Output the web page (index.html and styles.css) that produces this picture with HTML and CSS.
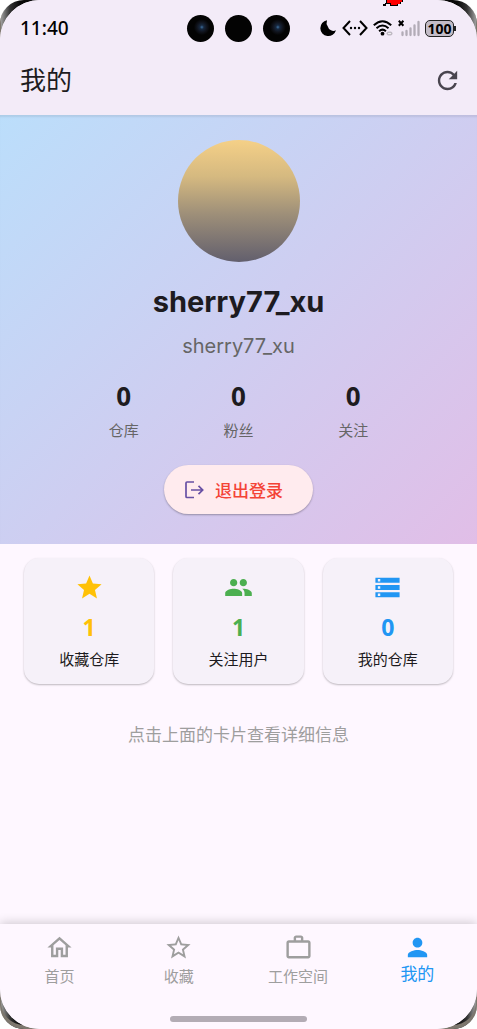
FILE: index.html
```html
<!DOCTYPE html>
<html lang="zh-CN">
<head>
  <meta charset="UTF-8">
  <meta name="viewport" content="width=device-width, initial-scale=1.0">
  <title>我的</title>
  <link rel="stylesheet" href="styles.css">
</head>
<body>
  <div class="device">
    <div class="screen">
      <header class="top">
        <div class="status-bar">
          <span class="time">11:40</span>
          <div class="cameras">
            <span class="camera lens"></span>
            <span class="camera"></span>
            <span class="camera lens"></span>
          </div>
          <div class="status-icons">
            <svg width="18" height="18" viewBox="0 0 18 18"><path d="M8 1.200A8 8 0 1 0 17 11.300A5.800 5.800 0 0 1 8.800 7.500A7 7 0 0 1 8 1.200z" fill="#000"/></svg>
            <svg width="26" height="18" viewBox="0 0 26 18"><path d="M8 2L1.500 9L8 16M18 2L24.500 9L18 16" fill="none" stroke="#000" stroke-width="2"/><g fill="#000"><circle cx="9" cy="9" r="1.200"/><circle cx="13" cy="9" r="1.200"/><circle cx="17" cy="9" r="1.200"/></g></svg>
            <svg width="20" height="18" viewBox="0 0 20 18"><g fill="none" stroke="#000" stroke-width="2"><path d="M.8 6.300Q9.500-1.800 18.200 6.300"/><path d="M3.500 9.300Q9.500 3.700 15.500 9.300"/><path d="M6.100 12.200Q9.500 9 12.900 12.200"/></g><circle cx="9.500" cy="14.700" r="1.900" fill="#000"/><rect x="13.500" y="12.500" width="6" height="4" rx="2" fill="#c0bac4"/><path d="M15 14.500h3" stroke="#eee"/></svg>
            <svg width="22" height="18" viewBox="0 0 22 18"><path d="M.8 1.800l4.600 5M5.400 1.800l-4.600 5" stroke="#000" stroke-width="2"/><path d="M4.500 13.500V16M8.500 12V16M12.500 9.500V16M16.500 6.500V16M20.500 3V16" stroke="#b2acb7" stroke-width="2.300" stroke-linecap="round"/></svg>
            <span class="battery">100</span>
          </div>
        </div>
        <div class="app-bar">
          <h1>我的</h1>
          <button class="refresh" aria-label="刷新">
            <svg width="29" height="29" viewBox="0 0 24 24"><path fill="currentColor" d="M17.650 6.350C16.200 4.900 14.210 4 12 4c-4.420 0-7.990 3.580-7.990 8s3.570 8 7.990 8c3.730 0 6.840-2.550 7.730-6h-2.080c-.82 2.330-3.040 4-5.650 4-3.310 0-6-2.690-6-6s2.690-6 6-6c1.660 0 3.140.69 4.220 1.780L13 11h7V4l-2.350 2.350z"/></svg>
          </button>
        </div>
      </header>

      <main>
        <section class="profile">
          <div class="avatar"></div>
          <h2 class="name">sherry77_xu</h2>
          <p class="login">sherry77_xu</p>
          <div class="stats">
            <div class="stat"><strong>0</strong><span>仓库</span></div>
            <div class="stat"><strong>0</strong><span>粉丝</span></div>
            <div class="stat"><strong>0</strong><span>关注</span></div>
          </div>
          <button class="logout">
            <svg width="22" height="22" viewBox="0 0 22 22"><path d="M11 3H4Q3 3 3 4V17.500Q3 18.500 4 18.500H11M8 11H19.500M15.500 6.800L19.700 11L15.500 15.200" fill="none" stroke="#6750a4" stroke-width="1.700"/></svg>
            退出登录
          </button>
        </section>

        <section class="cards">
          <button class="card starred">
            <svg width="29" height="29" viewBox="0 0 24 24"><path fill="currentColor" d="M12 17.270L18.180 21l-1.640-7.030L22 9.240l-7.190-.61L12 2 9.190 8.630 2 9.240l5.460 4.730L5.820 21z"/></svg>
            <strong>1</strong>
            <span>收藏仓库</span>
          </button>
          <button class="card following">
            <svg width="29" height="29" viewBox="0 0 24 24"><path fill="currentColor" d="M16 11c1.660 0 2.990-1.340 2.990-3S17.660 5 16 5s-3 1.340-3 3 1.340 3 3 3zM8 11c1.660 0 2.990-1.340 2.990-3S9.660 5 8 5 5 6.340 5 8s1.340 3 3 3zM8 13c-2.330 0-7 1.170-7 3.500V19h14v-2.500c0-2.330-4.670-3.500-7-3.500zM16 13c-.29 0-.62.02-.97.05 1.160.84 1.970 1.970 1.970 3.450V19h6v-2.500c0-2.330-4.670-3.500-7-3.500z"/></svg>
            <strong>1</strong>
            <span>关注用户</span>
          </button>
          <button class="card repos">
            <svg width="29" height="29" viewBox="0 0 24 24"><path fill="currentColor" d="M2 20h20v-4H2v4zm2-3h2v2H4v-2zM2 4v4h20V4H2zm4 3H4V5h2v2zm-4 7h20v-4H2v4zm2-3h2v2H4v-2z"/></svg>
            <strong>0</strong>
            <span>我的仓库</span>
          </button>
        </section>
        <p class="hint">点击上面的卡片查看详细信息</p>
      </main>

      <nav class="tab-bar">
        <div class="tabs">
          <a href="#home" class="tab">
            <svg width="29" height="29" viewBox="0 0 24 24"><path fill="currentColor" d="M12 5.690l5 4.500V18h-2v-6H9v6H7v-7.810l5-4.500M12 3L2 12h3v8h6v-6h2v6h6v-8h3L12 3z"/></svg>
            <span>首页</span>
          </a>
          <a href="#starred" class="tab">
            <svg width="29" height="29" viewBox="0 0 24 24"><path fill="currentColor" d="M22 9.240l-7.190-.62L12 2 9.190 8.630 2 9.240l5.460 4.730L5.820 21 12 17.270 18.180 21l-1.630-7.030L22 9.240zM12 15.400l-3.760 2.270 1-4.280-3.320-2.880 4.380-.38L12 6.100l1.710 4.040 4.380.38-3.320 2.880 1 4.280L12 15.400z"/></svg>
            <span>收藏</span>
          </a>
          <a href="#workspace" class="tab">
            <svg width="29" height="29" viewBox="0 0 24 24"><path fill="currentColor" d="M14 6V4h-4v2h4zM4 8v11h16V8H4zm16-2c1.110 0 2 .89 2 2v11c0 1.110-.89 2-2 2H4c-1.110 0-2-.89-2-2l.01-11c0-1.110.88-2 1.990-2h4V4c0-1.110.89-2 2-2h4c1.110 0 2 .89 2 2v2h4z"/></svg>
            <span>工作空间</span>
          </a>
          <a href="#me" class="tab active" aria-current="page">
            <svg width="29" height="29" viewBox="0 0 24 24"><path fill="currentColor" d="M12 12c2.210 0 4-1.790 4-4s-1.790-4-4-4-4 1.790-4 4 1.790 4 4 4zm0 2c-2.670 0-8 1.340-8 4v2h16v-2c0-2.660-5.330-4-8-4z"/></svg>
            <span>我的</span>
          </a>
        </div>
        <div class="home-indicator"></div>
      </nav>
    </div>
    <svg class="marker" width="21" height="7" viewBox="0 0 21 7"><path d="M3 0H20V2H18V4H15V6H7V4H3V6H0V4H2V3H3z" fill="#000"/><path d="M4 0H19V2H17V4H14V5H8V3H4z" fill="#f00"/></svg>
  </div>
</body>
</html>
```
FILE: styles.css
```css
:root {
  --surface: #fef7ff;
  --header-bg: #f3ebf8;
  --card-bg: #f6f1f9;
  --text-color: #1d1b20;
  --muted: #666;
  --grey: #9e9e9e;
  --blue: #2196f3;
}

* {
  margin: 0;
  padding: 0;
  box-sizing: border-box;
}

body {
  font-family: "Noto Sans", "Noto Sans CJK SC", sans-serif;
  background: #fff;
  color: var(--text-color);
}

button {
  font: inherit;
  color: inherit;
  border: none;
  background: none;
  cursor: pointer;
}

svg {
  display: block;
  flex-shrink: 0;
}

/* Phone frame */
.device {
  position: relative;
  background: linear-gradient(90deg, #aaa 0, #333 10px, #080808 20px, #080808 calc(100% - 20px), #333 calc(100% - 10px), #aaa 100%);
  border-radius: 24px;
  box-shadow: inset 0 -3px 0 1px #7d776e;
}

.screen {
  display: flex;
  flex-direction: column;
  min-height: 100vh;
  background: var(--surface);
  border-radius: 40px;
  overflow: hidden;
}

.marker {
  position: absolute;
  top: 0;
  left: 80.3%;
}

/* Header */
.top {
  background: var(--header-bg);
  padding-bottom: 11px;
}

.status-bar {
  display: grid;
  grid-template-columns: 1fr auto 1fr;
  align-items: center;
  height: 56px;
  padding: 0 20px;
}

.time {
  font-size: 19px;
  font-weight: 500;
  color: #000;
}

.cameras {
  display: flex;
  gap: 11px;
}

.camera {
  width: 27px;
  height: 27px;
  border-radius: 50%;
  background: #030303;
}

.lens {
  background: radial-gradient(circle at 55% 45%, #3d6f9e 0, #17283f 2px, #10131c 5px, #030303 8px);
}

.status-icons {
  display: flex;
  align-items: center;
  justify-content: flex-end;
  gap: 5px;
}

.battery {
  position: relative;
  width: 29px;
  height: 17px;
  margin-right: 3px;
  border: 1px solid #222;
  border-radius: 5px;
  background: #c3bcc7;
  color: #000;
  font-size: 14px;
  font-weight: 700;
  line-height: 15px;
  display: flex;
  justify-content: center;
}

.battery::after {
  content: "";
  position: absolute;
  right: -3px;
  top: 5px;
  width: 2px;
  height: 5px;
  background: #222;
}

.app-bar {
  display: flex;
  align-items: center;
  justify-content: space-between;
  height: 48px;
  padding: 0 15px 0 20px;
}

.app-bar h1 {
  font-size: 26px;
  font-weight: 400;
  line-height: 36px;
}

.refresh {
  color: #49454f;
}

/* Profile */
.profile {
  display: flex;
  flex-direction: column;
  align-items: center;
  padding: 25px 24px 30px;
  background: linear-gradient(135deg, #bbdefb, #e1bee7);
  box-shadow: inset 0 3px 2px -1px rgba(0, 0, 0, 0.08);
}

.avatar {
  width: 122px;
  height: 122px;
  border-radius: 50%;
  background: linear-gradient(#f5d087, #d5b980 30%, #9f9079 60%, #625f6d);
}

.name {
  margin-top: 21px;
  font-family: Inter, sans-serif;
  font-size: 29px;
  font-weight: 700;
  line-height: 38px;
}

.login {
  margin-top: 12px;
  font-family: Inter, sans-serif;
  font-size: 20px;
  line-height: 26px;
  color: var(--muted);
}

.stats {
  display: flex;
  justify-content: space-evenly;
  width: 100%;
  margin-top: 21px;
}

.stat {
  display: flex;
  flex-direction: column;
  align-items: center;
  gap: 8px;
}

.stat strong {
  font-size: 26px;
  line-height: 32px;
}

.stat span {
  font-size: 15px;
  line-height: 20px;
  color: var(--muted);
}

.logout {
  display: flex;
  align-items: center;
  gap: 10px;
  height: 49px;
  margin-top: 25px;
  padding: 0 30px 0 19px;
  border-radius: 25px;
  background: #ffebee;
  box-shadow: 0 1px 2px rgba(0, 0, 0, 0.3);
  color: #f44336;
  font-size: 17px;
  font-weight: 500;
}

/* Cards */
.cards {
  display: grid;
  grid-template-columns: repeat(3, 1fr);
  gap: 19px;
  padding: 14px 24px 0;
}

.card {
  display: flex;
  flex-direction: column;
  align-items: center;
  padding: 15px 8px;
  border-radius: 15px;
  background: var(--card-bg);
  box-shadow: 0 1px 2px rgba(0, 0, 0, 0.26);
}

.card strong {
  margin: 10px 0 7px;
  font-size: 23px;
  line-height: 30px;
}

.card span {
  font-size: 15px;
  line-height: 20px;
  color: var(--text-color);
}

.starred {
  color: #ffc107;
}

.following {
  color: #4caf50;
}

.repos {
  color: var(--blue);
}

.hint {
  margin-top: 39px;
  text-align: center;
  font-size: 17px;
  line-height: 24px;
  color: var(--grey);
}

/* Bottom navigation */
.tab-bar {
  margin-top: auto;
  padding: 9px 0 7px;
  background: var(--surface);
  box-shadow: 0 -1px 10px rgba(0, 0, 0, 0.2);
}

.tabs {
  display: grid;
  grid-template-columns: repeat(4, 1fr);
}

.tab {
  display: flex;
  flex-direction: column;
  align-items: center;
  gap: 4px;
  color: var(--grey);
  text-decoration: none;
  font-size: 15px;
  line-height: 20px;
}

.tab.active {
  gap: 2px;
  color: var(--blue);
  font-size: 17px;
}

.home-indicator {
  width: 137px;
  height: 6px;
  margin: 30px auto 0;
  border-radius: 3px;
  background: #b3acb5;
}
```
